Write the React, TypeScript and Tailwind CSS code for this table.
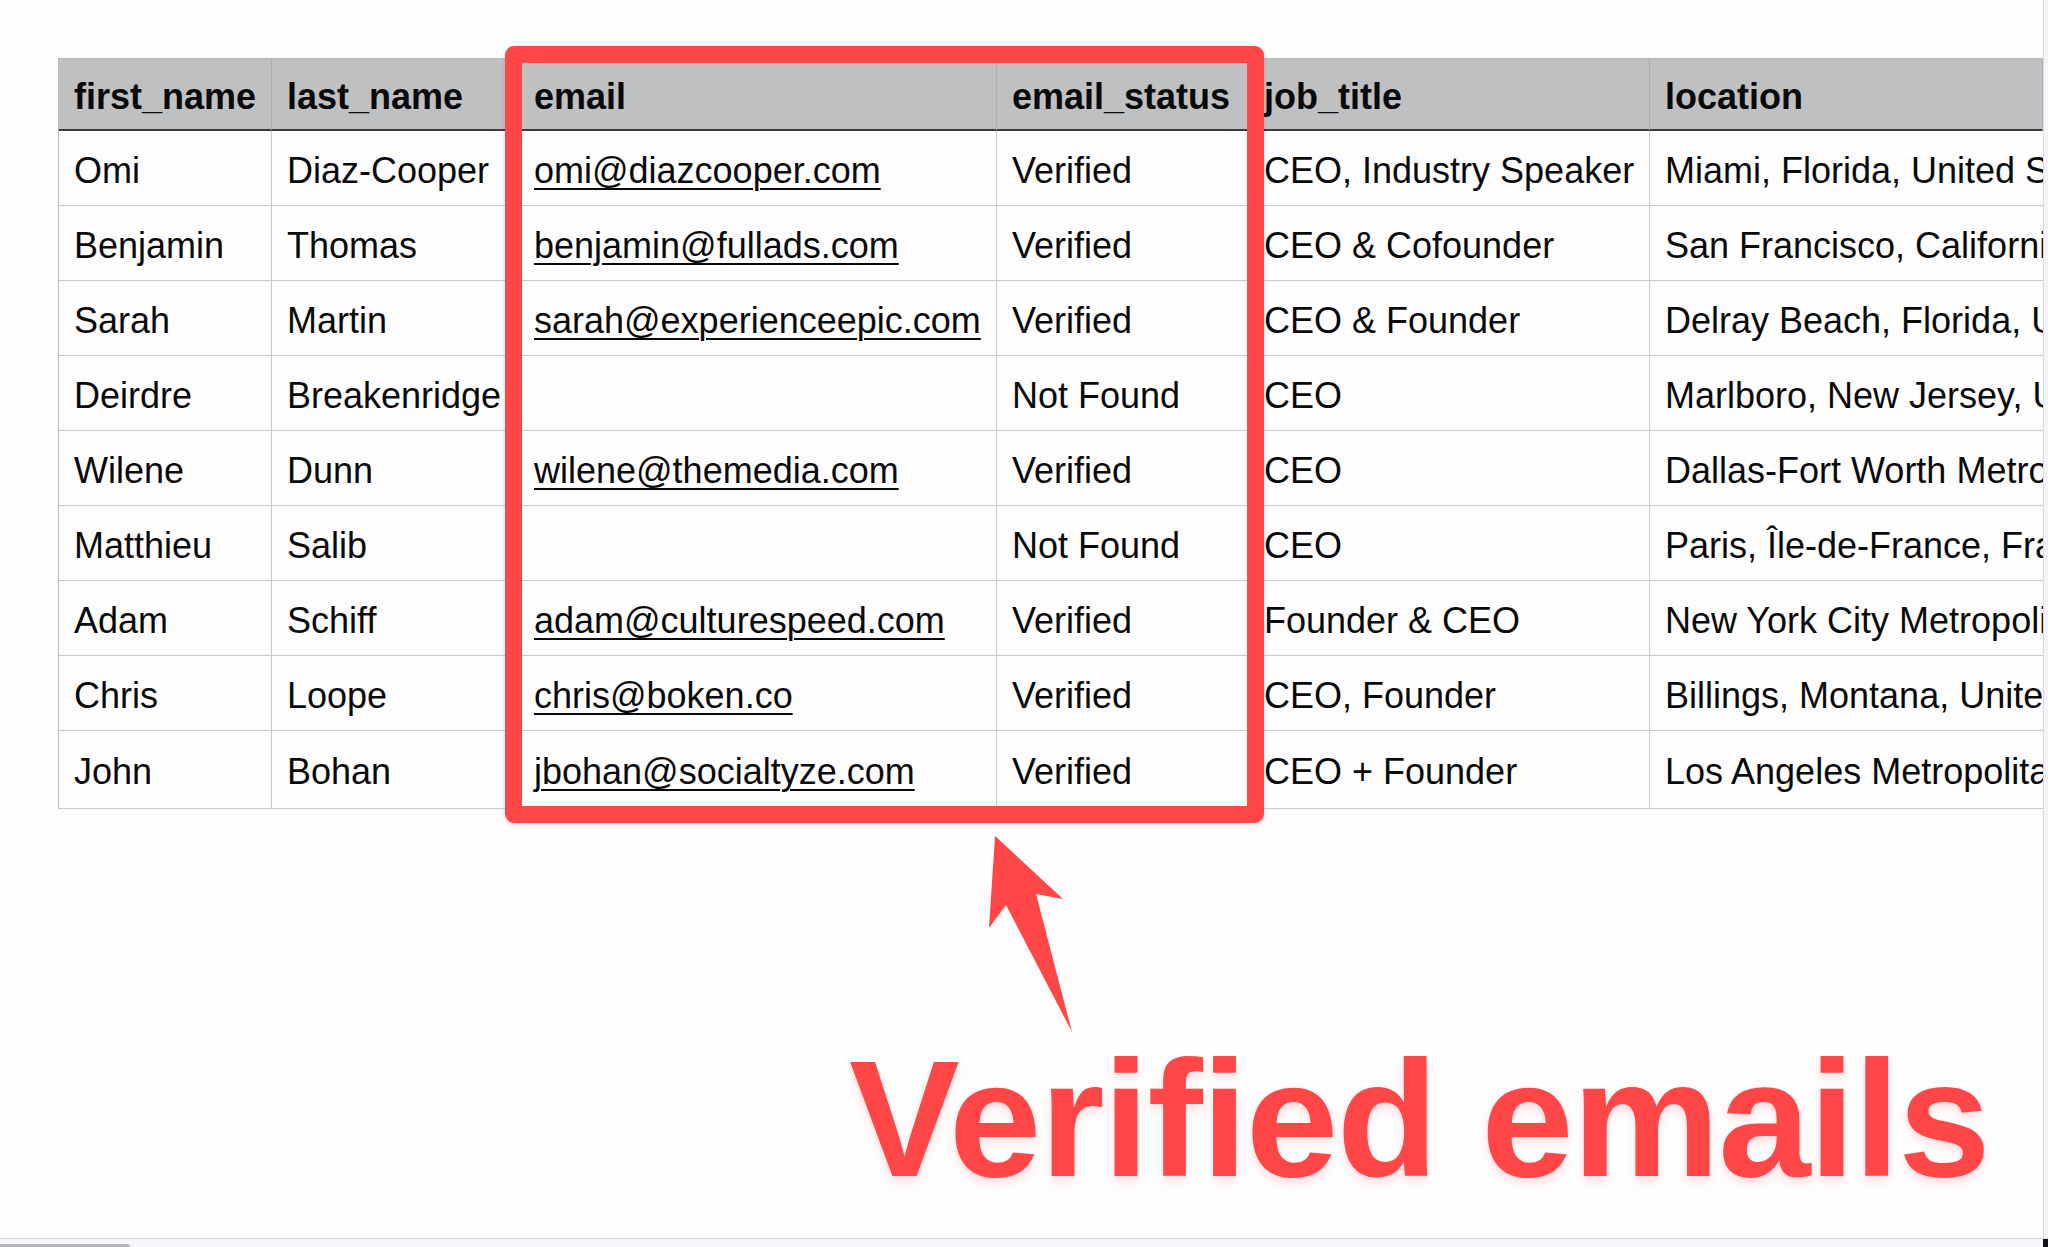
import React from "react"

type Row = {
  first: string
  last: string
  email: string
  status: string
  title: string
  location: string
}

const rows: Row[] = [
  { first: "Omi", last: "Diaz-Cooper", email: "omi@diazcooper.com", status: "Verified", title: "CEO, Industry Speaker", location: "Miami, Florida, United States" },
  { first: "Benjamin", last: "Thomas", email: "benjamin@fullads.com", status: "Verified", title: "CEO & Cofounder", location: "San Francisco, California, United States" },
  { first: "Sarah", last: "Martin", email: "sarah@experienceepic.com", status: "Verified", title: "CEO & Founder", location: "Delray Beach, Florida, United States" },
  { first: "Deirdre", last: "Breakenridge", email: "", status: "Not Found", title: "CEO", location: "Marlboro, New Jersey, United States" },
  { first: "Wilene", last: "Dunn", email: "wilene@themedia.com", status: "Verified", title: "CEO", location: "Dallas-Fort Worth Metroplex" },
  { first: "Matthieu", last: "Salib", email: "", status: "Not Found", title: "CEO", location: "Paris, Île-de-France, France" },
  { first: "Adam", last: "Schiff", email: "adam@culturespeed.com", status: "Verified", title: "Founder & CEO", location: "New York City Metropolitan Area" },
  { first: "Chris", last: "Loope", email: "chris@boken.co", status: "Verified", title: "CEO, Founder", location: "Billings, Montana, United States" },
  { first: "John", last: "Bohan", email: "jbohan@socialtyze.com", status: "Verified", title: "CEO + Founder", location: "Los Angeles Metropolitan Area" },
]

const headers = ["first_name", "last_name", "email", "email_status", "job_title", "location"]

const App = () => {
  return (
    <div className="w-[2048px] h-[1247px] flex flex-col overflow-hidden bg-[#fefdfe] font-['Liberation_Sans',Arial,sans-serif] text-[#0a0a0a]">
      <div className="flex flex-1 min-h-0">
        <div className="relative w-[2043px] pl-[58px] pt-[58px] overflow-hidden">
          {/* sheet */}
          <div className="grid grid-cols-[213px_247px_478px_252px_401px_1fr] border-l border-t border-[#b9b9bb] text-[36px]">
            {headers.map((h, i) => (
              <div
                key={h}
                className={
                  "h-[72px] flex items-center px-[15px] pt-[5px] whitespace-nowrap font-bold bg-[#bfc0c2] border-b-2 border-b-[#3b3b3d] border-r border-r-[#aeaeb0] " +
                  (i === 5 ? "overflow-hidden" : "")
                }
              >
                {h}
              </div>
            ))}
            {rows.map((r, idx) => (
              <div
                key={r.first}
                className={
                  "contents " +
                  (idx === rows.length - 1 ? "[&>div]:h-[78px]" : "[&>div]:h-[75px]")
                }
              >
                <div className="flex items-center px-[15px] pt-[5px] whitespace-nowrap border-r border-b border-[#c9c9cb]">{r.first}</div>
                <div className="flex items-center px-[15px] pt-[5px] whitespace-nowrap border-r border-b border-[#c9c9cb]">{r.last}</div>
                <div className="flex items-center px-[15px] pt-[5px] whitespace-nowrap border-r border-b border-[#c9c9cb]">
                  {r.email && (
                    <span className="underline decoration-[2px] underline-offset-[5px]">{r.email}</span>
                  )}
                </div>
                <div className="flex items-center px-[15px] pt-[5px] whitespace-nowrap border-r border-b border-[#c9c9cb]">{r.status}</div>
                <div className="flex items-center px-[15px] pt-[5px] whitespace-nowrap border-r border-b border-[#c9c9cb]">{r.title}</div>
                <div className="flex items-center px-[15px] pt-[5px] whitespace-nowrap overflow-hidden border-b border-[#c9c9cb]">{r.location}</div>
              </div>
            ))}
          </div>

          {/* caption */}
          <div className="mt-[227px] ml-[791px] whitespace-nowrap text-[166px] leading-none font-bold tracking-[-1.5px] text-[#ff4747] [text-shadow:0_5px_8px_rgba(255,71,71,0.18)]">
            Verified emails
          </div>

          {/* highlight box */}
          <div className="absolute left-[505px] top-[46px] w-[759px] h-[777px] border-[17px] border-[#ff4747] rounded-[9px] shadow-[0_2px_4px_rgba(0,0,0,0.12)] pointer-events-none" />

          {/* arrow */}
          <svg
            className="absolute left-0 top-0 pointer-events-none"
            width="2043"
            height="1238"
            viewBox="0 0 2043 1238"
          >
            <polygon
              points="995,836 1063,899 1036,894 1072,1032 1006,905 989,928"
              fill="#ff4747"
            />
          </svg>
        </div>
        <div className="w-[5px] bg-[#f6f4f8] border-l border-[#dcdcde]" />
      </div>
      <div className="h-[9px] flex border-t border-[#dadadc] bg-[#f8f6fa]">
        <div className="w-[130px] h-[3px] mt-auto bg-[#b4b4b6] rounded-tr-sm" />
        <div className="flex-1" />
        <div className="w-[5px] bg-[#111]" />
      </div>
    </div>
  )
}

export default App
